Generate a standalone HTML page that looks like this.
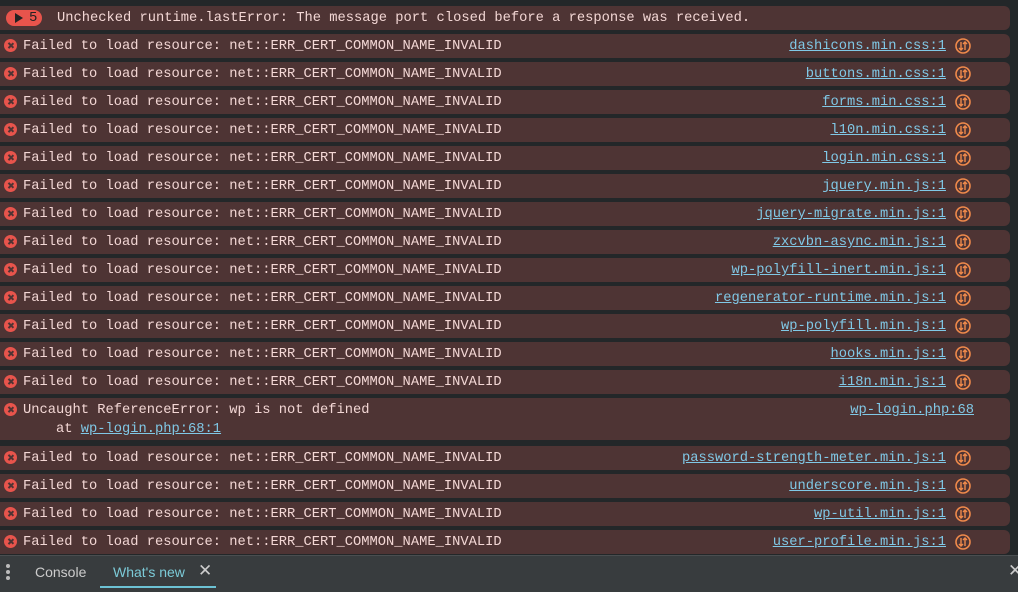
<!DOCTYPE html>
<html><head><style>
body{margin:0;width:1018px;height:591px;background:#232729;overflow:hidden;position:relative;font-family:"Liberation Mono",monospace;font-size:13.75px;color:#f3d7d5}
.r{position:absolute;left:0;width:1010px;height:24px;background:#4e3434;border-radius:0 6px 6px 0}
.t{position:absolute;left:23px;white-space:pre;line-height:16px}
.l{position:absolute;right:64px;color:#80c8e6;text-decoration:underline;line-height:16px}
.ic{position:absolute;left:4px;width:13px;height:13px;border-radius:50%;background:#e8544c}
.ic:before,.ic:after{content:"";position:absolute;left:6px;top:3px;width:1.6px;height:7px;background:#4e3434;transform:rotate(45deg)}
.ic:after{transform:rotate(-45deg)}
.n{position:absolute;left:955px;width:16px;height:16px}
</style></head><body>
<div class="r" style="top:6px;">
 <div style="position:absolute;left:6px;top:4px;width:36px;height:16px;background:#e8544c;border-radius:8px;color:#222;font-size:14px;line-height:16px"><span style="position:absolute;left:9px;top:3px;width:0;height:0;border-left:8px solid #222;border-top:5px solid transparent;border-bottom:5px solid transparent"></span><span style="position:absolute;left:23px">5</span></div>
 <div class="t" style="left:57px;top:5px">Unchecked runtime.lastError: The message port closed before a response was received.</div>
</div>
<div id="rows"></div>
<script>
const a=["dashicons.min.css:1","buttons.min.css:1","forms.min.css:1","l10n.min.css:1","login.min.css:1","jquery.min.js:1","jquery-migrate.min.js:1","zxcvbn-async.min.js:1","wp-polyfill-inert.min.js:1","regenerator-runtime.min.js:1","wp-polyfill.min.js:1","hooks.min.js:1","i18n.min.js:1"];
const b=["password-strength-meter.min.js:1","underscore.min.js:1","wp-util.min.js:1","user-profile.min.js:1"];
const svg='<svg class="n" viewBox="0 0 16 16" style="top:4px"><circle cx="8" cy="8" r="7" fill="none" stroke="#f08a4b" stroke-width="1.6"/><path d="M6 4v8M4 10l2 2 2-2M10 12V4M8 6l2-2 2 2" fill="none" stroke="#f08a4b" stroke-width="1.4"/></svg>';
let h="";
function row(top,l){h+='<div class="r" style="top:'+top+'px"><div class="ic" style="top:5px"></div><div class="t" style="top:5px">Failed to load resource: net::ERR_CERT_COMMON_NAME_INVALID</div><div class="l" style="top:5px">'+l+'</div>'+svg+'</div>';}
a.forEach((l,i)=>row(34+28*i,l));
b.forEach((l,i)=>row(446+28*i,l));
h+='<div class="r" style="top:398px;height:42px"><div class="ic" style="top:5px"></div><div class="t" style="top:5px">Uncaught ReferenceError: wp is not defined</div><div class="t" style="top:24px">    at <span style="color:#80c8e6;text-decoration:underline">wp-login.php:68:1</span></div><div class="l" style="top:5px;right:36px">wp-login.php:68</div></div>';
document.getElementById("rows").innerHTML=h;
</script>
<div style="position:absolute;left:0;top:555px;width:1018px;height:36px;background:#383c3e;border-top:1px solid #4a4e50;font-family:'Liberation Sans',sans-serif;font-size:14px">
 <div style="position:absolute;left:6px;top:8px;width:4px;height:4px;border-radius:2px;background:#bbb;box-shadow:0 6px 0 #bbb,0 12px 0 #bbb"></div>
 <div style="position:absolute;left:35px;top:8px;color:#ccc">Console</div>
 <div style="position:absolute;left:113px;top:8px;color:#7ccbd8">What's new</div>
 <div style="position:absolute;left:198px;top:5px;color:#ccc;font-size:17px">✕</div>
 <div style="position:absolute;left:100px;top:30px;width:116px;height:2px;background:#6cc2d4"></div>
 <div style="position:absolute;left:1008px;top:5px;color:#ccc;font-size:17px">✕</div>
</div>
</body></html>
